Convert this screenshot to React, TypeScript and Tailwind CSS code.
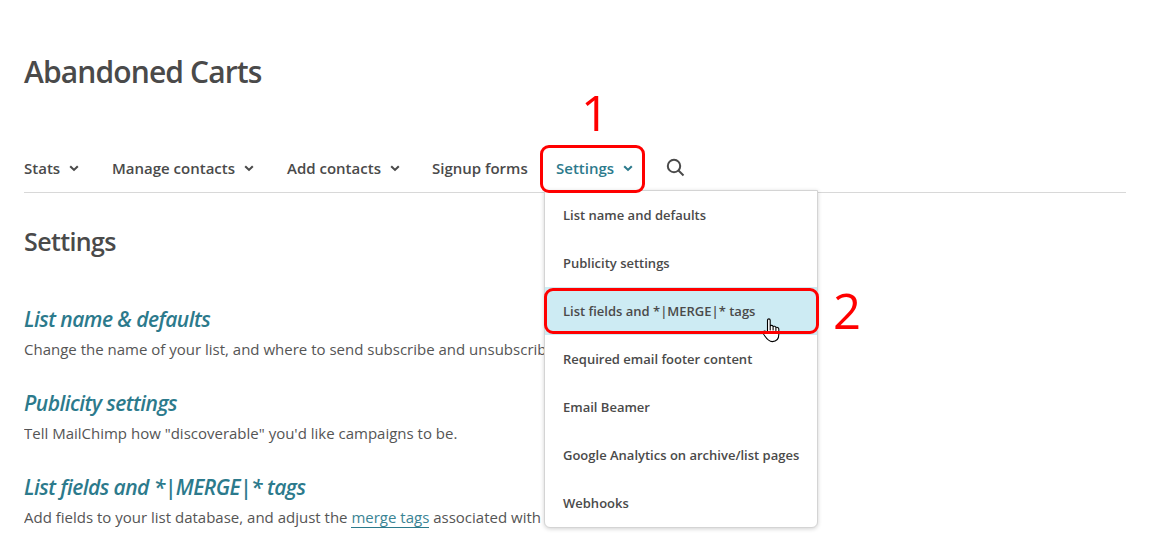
import React from "react";

const Chevron = () => (
  <svg className="mt-px" width="10" height="7" viewBox="0 0 10 7" fill="none" stroke="currentColor" strokeWidth="2.1">
    <path d="M1.200 1.200 5 4.900 8.800 1.200" />
  </svg>
);

const NavItem = ({ label, className, arrow = true }: { label: string; className: string; arrow?: boolean }) => (
  <a className={`flex shrink-0 items-center justify-between text-[15px] leading-6 font-semibold whitespace-nowrap ${className}`}>
    {label}
    {arrow && <Chevron />}
  </a>
);

const menu = [
  "List name and defaults",
  "Publicity settings",
  "List fields and *|MERGE|* tags",
  "Required email footer content",
  "Email Beamer",
  "Google Analytics on archive/list pages",
  "Webhooks",
];

const Section = ({ title, children }: { title: string; children: React.ReactNode }) => (
  <section className="h-[84px]">
    <h3 className="text-[21px] leading-[30px] font-semibold whitespace-nowrap text-[#2c7a8c] italic tracking-[-0.54px]">{title}</h3>
    <p className="w-[521px] overflow-hidden pt-[3px] text-[15px] leading-6 whitespace-nowrap text-[#555555]">{children}</p>
  </section>
);

export default function App() {
  return (
    <main className="relative h-[547px] w-[1153px] overflow-hidden bg-white pl-6 font-['Open_Sans',sans-serif] text-[#4a4a4a]">
      <h1 className="pt-[52px] text-[30px] leading-10 font-semibold tracking-[-0.87px]">Abandoned Carts</h1>
      <nav className="mt-[64px] flex h-[37px] w-[1102px] items-start border-b border-[#d8d8d8]">
        <NavItem label="Stats" className="w-[55px]" />
        <NavItem label="Manage contacts" className="ml-[33px] w-[142px]" />
        <NavItem label="Add contacts" className="ml-[33px] w-[113px]" />
        <NavItem label="Signup forms" className="ml-[32px] w-[97px]" arrow={false} />
        <NavItem label="Settings" className="ml-[27px] w-[77px] text-[#2c7a8c]" />
        <svg className="mt-[2px] ml-[33px]" width="19" height="19" viewBox="0 0 19 19" fill="none" stroke="currentColor" strokeWidth="2">
          <circle cx="8" cy="8" r="6.2" />
          <path d="m12.500 12.500 5 5" />
        </svg>
      </nav>
      <h2 className="mt-[30px] text-[25px] leading-9 font-semibold tracking-[-0.62px]">Settings</h2>
      <div className="mt-[45px]">
        <Section title="List name & defaults">Change the name of your list, and where to send subscribe and unsubscrib</Section>
        <Section title="Publicity settings">Tell MailChimp how "discoverable" you'd like campaigns to be.</Section>
        <Section title="List fields and *|MERGE|* tags">
          Add fields to your list database, and adjust the <a className="border-b border-[#2c7a8c] text-[#3b8494]">merge tags</a> associated with
        </Section>
      </div>

      <div className="absolute top-[190px] left-[544px] w-[274px] rounded-b-md border border-[#d4d4d4] bg-white shadow-[0_1px_4px_rgba(0,0,0,0.18)]">
        {menu.map((item, i) => (
          <div key={item} className={`flex h-12 items-center pt-px pl-[18px] text-[13px] font-semibold whitespace-nowrap ${i === 2 ? "bg-[#cdebf3]" : ""}`}>
            {item}
          </div>
        ))}
      </div>
      <svg className="absolute top-[318px] left-[762px]" width="19" height="25" viewBox="0 0 19 25" fill="white" stroke="black" strokeWidth="1.1" strokeLinejoin="round" strokeLinecap="round">
        <path d="M5.500 14.500V2.200C5.500.400 8.200.400 8.200 2.200V8c.600-1 2.700-.800 2.900.7.700-.900 2.700-.500 2.800.9.800-.700 2.900-.300 2.900 1.500v5.500c0 4-2 7-6.500 7-4 0-6-3.500-8.300-6.800-1.500-2.500-1-3.600.5-3.700 1.100 0 2 .800 3 1.400M8.200 8v4M11.100 8.700V12M13.900 9.600v3" />
      </svg>
      <div className="absolute top-[145px] left-[540px] h-[48px] w-[105px] rounded-[9px] border-3 border-[#ff0000]" />
      <div className="absolute top-[288px] left-[544px] h-[46px] w-[275px] rounded-[9px] border-3 border-[#ff0000]" />
      <span className="absolute top-[78px] left-[581px] text-[49px] leading-[68px] text-[#ff0000]">1</span>
      <span className="absolute top-[276px] left-[833px] text-[49px] leading-[68px] text-[#ff0000]">2</span>
    </main>
  );
}
